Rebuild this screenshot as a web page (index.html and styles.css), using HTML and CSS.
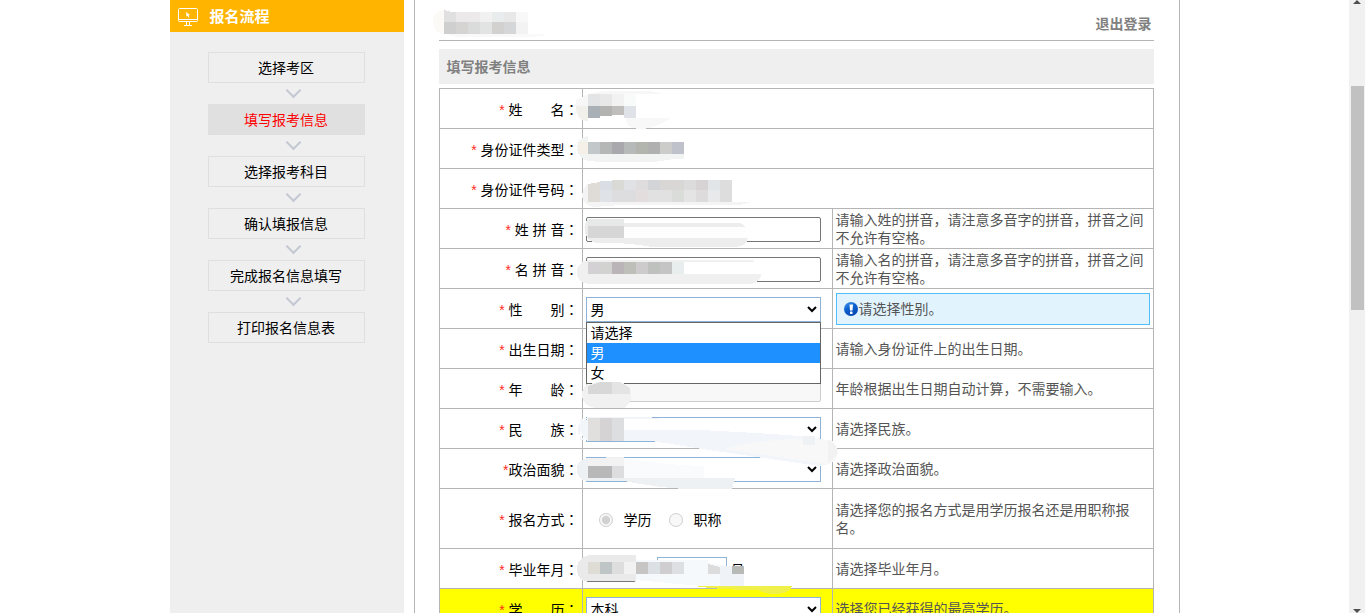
FILE: index.html
```html
<!DOCTYPE html>
<html lang="zh-CN">
<head>
<meta charset="utf-8">
<title>填写报考信息</title>
<link rel="stylesheet" href="styles.css">
</head>
<body>
<div class="window">
  <div class="page">
    <div class="container">
      <aside class="sidebar">
        <h2 class="sidebar-title">
          <svg class="monitor" width="20" height="18" viewBox="0 0 20 18" fill="none" stroke="#fff" aria-hidden="true">
            <rect x="0.5" y="0.5" width="19" height="13" rx="1"/>
            <path d="M1 11.5H19M8.500 14V17M11.500 14V17M6 17.500H14"/>
            <path d="M8 4L12 7L10.500 7.500L11.500 9.500L10.500 9.500L9.500 8L8.500 8.500Z" fill="#fff" stroke="none"/>
          </svg>
          报名流程
        </h2>
        <ol class="steps">
          <li class="step">选择考区</li>
          <li class="step current">填写报考信息</li>
          <li class="step">选择报考科目</li>
          <li class="step">确认填报信息</li>
          <li class="step">完成报名信息填写</li>
          <li class="step">打印报名信息表</li>
        </ol>
      </aside>
      <main class="main">
        <header class="top">
          <a class="logout" href="#">退出登录</a>
        </header>
        <h1 class="section-title">填写报考信息</h1>
        <form>
          <table class="form-table">
            <colgroup><col class="col-label"><col class="col-field"><col class="col-hint"></colgroup>
            <tbody>
              <tr><th><i>*</i> 姓　　名<b>：</b></th><td colspan="2"></td></tr>
              <tr><th><i>*</i> 身份证件类型<b>：</b></th><td colspan="2"></td></tr>
              <tr><th><i>*</i> 身份证件号码<b>：</b></th><td colspan="2"></td></tr>
              <tr><th><label for="xing"><i>*</i> 姓 拼 音<b>：</b></label></th><td class="field"><input class="control text" id="xing" type="text"></td><td class="hint">请输入姓的拼音，请注意多音字的拼音，拼音之间不允许有空格。</td></tr>
              <tr><th><label for="ming"><i>*</i> 名 拼 音<b>：</b></label></th><td class="field"><input class="control text" id="ming" type="text"></td><td class="hint">请输入名的拼音，请注意多音字的拼音，拼音之间不允许有空格。</td></tr>
              <tr><th><label for="sex"><i>*</i> 性　　别<b>：</b></label></th>
                <td class="field"><div class="dropdown">
                  <select class="control select" id="sex"><option>请选择</option><option selected>男</option><option>女</option></select>
                  <ul class="options" role="listbox" aria-label="性别">
                    <li role="option">请选择</li>
                    <li role="option" class="selected" aria-selected="true">男</li>
                    <li role="option">女</li>
                  </ul>
                </div></td>
                <td class="hint"><div class="tip">
                  <svg width="14" height="14" viewBox="0 0 14 14" aria-hidden="true">
                    <defs><linearGradient id="ball" x1="0" y1="0" x2="0.500" y2="1"><stop offset="0" stop-color="#3d9bee"/><stop offset="0.500" stop-color="#0d62cf"/><stop offset="1" stop-color="#0648b4"/></linearGradient></defs>
                    <circle cx="7" cy="7" r="7" fill="url(#ball)"/>
                    <path d="M5.500 2.500H9L8.500 8.500H6Z" fill="#fff"/><rect x="6" y="9.500" width="2.500" height="2.500" rx="0.500" fill="#fff"/>
                  </svg>请选择性别。</div></td></tr>
              <tr><th><label for="birth"><i>*</i> 出生日期<b>：</b></label></th><td class="field"><input class="control text" id="birth" type="text"></td><td class="hint">请输入身份证件上的出生日期。</td></tr>
              <tr><th><label for="age"><i>*</i> 年　　龄<b>：</b></label></th><td class="field"><input class="control text" id="age" type="text" disabled></td><td class="hint">年龄根据出生日期自动计算，不需要输入。</td></tr>
              <tr><th><label for="nation"><i>*</i> 民　　族<b>：</b></label></th><td class="field"><select class="control select" id="nation"><option></option></select></td><td class="hint">请选择民族。</td></tr>
              <tr><th><label for="party"><i>*</i>政治面貌<b>：</b></label></th><td class="field"><select class="control select" id="party"><option></option></select></td><td class="hint">请选择政治面貌。</td></tr>
              <tr class="tall"><th><i>*</i> 报名方式<b>：</b></th>
                <td class="field"><div class="radios">
                  <label><input type="radio" name="way" checked disabled>学历</label>
                  <label><input type="radio" name="way" disabled>职称</label>
                </div></td><td class="hint">请选择您的报名方式是用学历报名还是用职称报名。</td></tr>
              <tr><th><i>*</i> 毕业年月<b>：</b></th>
                <td class="field"><div class="date">
                  <input class="control year" type="text" aria-label="毕业年">
                  <select class="control select month" aria-label="毕业月"><option></option></select>
                  <span>月</span>
                </div></td><td class="hint">请选择毕业年月。</td></tr>
              <tr class="highlight"><th><label for="degree"><i>*</i> 学　　历<b>：</b></label></th><td class="field"><select class="control select" id="degree"><option>本科</option></select></td><td class="hint">选择您已经获得的最高学历。</td></tr>
            </tbody>
          </table>
        </form>
        <svg class="masks" width="766" height="613" viewBox="414 0 766 613" aria-hidden="true" shape-rendering="crispEdges">
          <!-- account -->
          <path d="M444 10C436 10 432 15 433 24C434 31 440 34 444 34Z" fill="#fcfaf7"/>
          <path d="M448 34H546C546 36 536 37 520 37H460Q450 37 448 34" fill="#f9f9f9"/>
          <path d="M444 10L452 12H456V22H444Z" fill="#e0e0e0"/><path d="M456 12h24v10h-24z" fill="#ebe9e9"/><path d="M480 12h12v10h-12z" fill="#f0f1f0"/><path d="M492 12h12v10h-12z" fill="#e9ecec"/><path d="M504 12h12v10h-12z" fill="#e8e8e8"/><path d="M516 12h12v10h-12z" fill="#f8f8f8"/>
          <path d="M444 22h12v12h-12z" fill="#cfcfcf"/><path d="M456 22h12v12h-12z" fill="#d6d4d3"/><path d="M468 22h12v12h-12z" fill="#d9dcda"/><path d="M480 22h12v12h-12z" fill="#e1e4e3"/><path d="M492 22h12v12h-12z" fill="#d3d1d0"/><path d="M504 22h12v12h-12z" fill="#d5d6d8"/><path d="M516 22h12v12h-12z" fill="#f3f3f3"/>
          <!-- name -->
          <path d="M576 100Q590 91 610 91H650L664 94H588V121C579 122 575 116 576 106Z" fill="#f7f7f7"/>
          <path d="M576 106H588V121C580 121 576 114 576 106" fill="#f2f0eb"/>
          <path d="M626 118H671Q655 129 640 129C629 129 625 124 626 118" fill="#f8f8f8"/>
          <path d="M588 94h12v12h-12z" fill="#e3e4e6"/><path d="M600 94h12v12h-12z" fill="#e8e8e9"/><path d="M612 94h12v12h-12z" fill="#f2f2f2"/><path d="M624 94h12v12h-12z" fill="#f9fbfb"/>
          <path d="M588 106h12v12h-12z" fill="#a9b1b6"/><path d="M600 106h12v10h-12z" fill="#b3b4b2"/><path d="M612 106h12v9h-12z" fill="#bfbebc"/><path d="M624 106h12v12h-12z" fill="#dfe3e7"/>
          <!-- document type -->
          <path d="M588 136C580 137 577 142 577 149C578 157 584 161 590 161L600 162H654L674 159H684V154H588Z" fill="#f2f3f3"/>
          <path d="M578 142h10v12h-9z" fill="#f4f0e7"/>
          <path d="M588 142h12v12h-12z" fill="#c2c7ca"/><path d="M600 142h12v12h-12z" fill="#b4b7b5"/><path d="M612 142h12v12h-12z" fill="#a9a9ad"/><path d="M624 142h12v12h-12z" fill="#b6bbba"/><path d="M636 142h12v12h-12z" fill="#b2b5ae"/><path d="M648 142h12v12h-12z" fill="#b0b0b0"/><path d="M660 142h12v12h-12z" fill="#cccdca"/><path d="M672 142h12v12h-12z" fill="#bfc2cb"/>
          <!-- document number -->
          <path d="M588 184C579 190 580 206 594 207L620 205H740L752 202H588Z" fill="#f4f4f4"/>
          <path d="M588 184L600 182V202H588Z" fill="#dfdcd7"/><path d="M600 181h12v9h-12z" fill="#d8dee3"/><path d="M600 190h12v12h-12z" fill="#dfe3e7"/><path d="M612 180h12v10h-12z" fill="#d9dad5"/><path d="M624 180h12v10h-12z" fill="#e0e1e5"/><path d="M636 180h12v10h-12z" fill="#dedcdc"/><path d="M648 180h12v10h-12z" fill="#d3d4d7"/><path d="M660 180h24v10h-24z" fill="#d8d7d5"/><path d="M684 180h12v10h-12z" fill="#dcdcdc"/><path d="M696 180h12v10h-12z" fill="#d7d2d4"/><path d="M708 180h12v10h-12z" fill="#e2e5e7"/><path d="M720 180h12v22h-12z" fill="#dedddd"/>
          <path d="M612 190h24v12h-24z" fill="#dddddf"/><path d="M636 190h12v12h-12z" fill="#e3dedd"/><path d="M648 190h36v12h-36z" fill="#e1e1e2"/><path d="M672 190h12v12h-12z" fill="#dadcda"/><path d="M684 190h12v12h-12z" fill="#e4e4e4"/><path d="M696 190h12v12h-12z" fill="#dddbdc"/><path d="M708 190h12v12h-12z" fill="#e8e9eb"/>
          <!-- surname pinyin -->
          <path d="M588 219H624V223H740Q748 225 746 238H748Q746 246 736 247H652Q630 243 610 243H596C583 241 582 223 588 219" fill="#ededed"/>
          <path d="M624 227h122v11h-122z" fill="#fefefe"/><path d="M588 219h36v7h-36z" fill="#e7e8e8"/><path d="M588 226h36v12h-36z" fill="#d6d6d6"/>
          <!-- given name pinyin -->
          <path d="M588 260H752Q758 262 756 274H761Q760 284 748 284H590C573 284 572 263 588 260" fill="#f0f0f0"/>
          <path d="M672 262h84v12h-84z" fill="#fff"/><path d="M588 262h12v12h-12z" fill="#d3d1d3"/><path d="M600 262h12v12h-12z" fill="#d2d3d0"/><path d="M612 262h12v12h-12z" fill="#bab4b9"/><path d="M624 262h12v12h-12z" fill="#bfbfba"/><path d="M636 262h12v12h-12z" fill="#cecbcc"/><path d="M648 262h24v12h-24z" fill="#bfc1bf"/><path d="M660 262h12v12h-12z" fill="#c4c4c4"/><path d="M672 262h12v12h-12z" fill="#e8eded"/>
          <!-- age -->
          <path d="M590 384C579 386 578 405 594 408H624C636 402 633 385 620 382H596Z" fill="#f1f1f1"/>
          <path d="M588 386L600 382H612V394H588Z" fill="#d8d8d8"/><path d="M612 382h8l10 6v6h-18z" fill="#e4e4e4"/>
          <!-- ethnic group -->
          <path d="M588 417H648L662 419H580V440H588C574 440 575 420 588 417" fill="#f1f4f8"/>
          <path d="M580 420H624V430H700Q760 433 800 436Q836 438 838 450Q837 464 820 466Q790 462 750 456Q700 449 652 441H596C583 443 578 433 580 420" fill="#f2f6fa"/>
          <path d="M724 449Q760 439 803 439L832 440Q840 448 837 457Q833 465 824 464L800 460Z" fill="#f8f8f8"/>
          <path d="M803 436h12v9h-12z" fill="#eff2f4"/><path d="M828 440Q841 447 836 456L828 463Z" fill="#f2f2f2"/>
          <path d="M588 418h12v23h-12z" fill="#e0dfde"/><path d="M600 418h12v23h-12z" fill="#d5d3d4"/><path d="M612 418h12v23h-12z" fill="#dcdee0"/>
          <!-- political status -->
          <path d="M588 458C573 459 573 479 586 481H624Q660 488 686 489H732L735 478H624V457Z" fill="#edf1f4"/>
          <path d="M624 458Q660 465 704 466V478H624Z" fill="#fafbfc"/>
          <path d="M588 458h36v8h-36z" fill="#f2f2f2"/><path d="M588 466h24v12h-24z" fill="#b9b8b9"/><path d="M612 466h12v12h-12z" fill="#dddddf"/>
          <!-- graduation date -->
          <path d="M590 555Q576 558 577 571Q578 581 588 581H636V555Z" fill="#eaeaea"/>
          <path d="M636 560H708V563L727 566V586H700L636 580Z" fill="#f6f9fc"/>
          <path d="M588 562h12v12h-12z" fill="#dfdbd5"/><path d="M600 562h12v12h-12z" fill="#bfc4c7"/><path d="M612 562h12v12h-12z" fill="#dedede"/><path d="M624 562h12v12h-12z" fill="#f2f2f2"/><path d="M636 562h12v12h-12z" fill="#c6c5c4"/><path d="M648 562h12v12h-12z" fill="#dae0e4"/><path d="M660 562h12v12h-12z" fill="#d0cdd0"/><path d="M672 562h12v12h-12z" fill="#dddfe2"/>
          <path d="M708 564L720 567V574H708Z" fill="#dcdcdd"/><path d="M720 566h24v20h-24z" fill="#eff2f6"/><path d="M732 566h12v8h-12z" fill="#b8bab8"/>
          <path d="M694 586H792Q790 593 778 594Q764 594 758 590Q720 590 694 586" fill="#eff04a"/>
        </svg>
      </main>
    </div>
  </div>
  <div class="scrollbar" aria-hidden="true">
    <svg width="8" height="4" viewBox="0 0 8 4"><path d="M4 0L8 4H0Z" fill="#505050"/></svg>
    <div class="thumb"></div>
    <svg width="8" height="4" viewBox="0 0 8 4"><path d="M4 4L8 0H0Z" fill="#505050"/></svg>
  </div>
</div>
</body>
</html>
```
FILE: styles.css
```css
* { box-sizing: border-box; }

body {
  margin: 0;
  background: #fff;
  color: #000;
  font: 14px/18px "Liberation Sans", "Noto Sans CJK SC", sans-serif;
}

.window {
  display: flex;
  height: 100vh;
  overflow: hidden;
}

.page { flex: 1; min-width: 0; overflow: hidden; }

.container {
  display: flex;
  gap: 10px;
  max-width: 1010px;
  min-height: 100%;
  margin: 0 auto;
}

/* Sidebar */
.sidebar {
  flex: 0 0 234px;
  background: #efefef;
}

.sidebar-title {
  display: flex;
  align-items: center;
  gap: 12px;
  height: 32px;
  margin: 0;
  padding: 1px 0 0 8px;
  background: #ffb400;
  color: #fff;
  font-size: 15px;
}

.steps {
  display: grid;
  gap: 21px;
  margin: 0;
  padding: 20px 39px 20px 38px;
  list-style: none;
}

.step {
  position: relative;
  height: 31px;
  border: 1px solid #dfdfdf;
  line-height: 31px;
  text-align: center;
}

.step.current { background: #e0e0e0; color: #f00; }

.step:not(:last-child)::after {
  content: "";
  position: absolute;
  left: 79px;
  top: 32px;
  width: 9px;
  height: 9px;
  border: solid #c3c8d2;
  border-width: 0 2px 2px 0;
  transform: rotate(45deg);
}

/* Main column */
.main {
  position: relative;
  flex: 1;
  min-width: 0;
  padding: 0 25px 0 24px;
  border: solid #b5b5b5;
  border-width: 0 1px;
}

.top {
  display: flex;
  justify-content: flex-end;
  align-items: center;
  height: 41px;
  padding: 8px 2px 0;
  border-bottom: 1px solid #b5b5b5;
}

.logout {
  color: #808080;
  font-weight: bold;
  text-decoration: none;
}

.section-title {
  margin: 8px 0 4px;
  padding: 1px 8px 0;
  background: #efefef;
  color: #808080;
  font-size: 14px;
  line-height: 34px;
}

.form-table {
  width: 100%;
  border-collapse: collapse;
  table-layout: fixed;
}

.col-label { width: 143px; }
.col-field { width: 250px; }

.form-table tr { height: 40px; }
.form-table .tall { height: 60px; }
.form-table .highlight { background: #ff0; }

.form-table th,
.form-table td {
  padding: 0 3px;
  border: 1px solid #b5b5b5;
  font-weight: normal;
  text-align: left;
}

.form-table th { padding-top: 2px; text-align: right; white-space: nowrap; }
.form-table th i { color: #ff2a1a; font-style: normal; }
.form-table .field { padding-top: 2px; }
.form-table .hint { color: #555; }

/* Centred form of the full-width colon */
.form-table th b {
  font-family: "Noto Sans CJK TC", sans-serif;
  font-feature-settings: "locl" 0;
  font-weight: normal;
}

.control {
  display: block;
  width: 235px;
  height: 25px;
  margin: 0;
  background: #fff;
  color: #000;
  font: inherit;
}

.text, .year { padding: 0 3px; border: 1px solid #767676; border-radius: 2px; }
.text:disabled { border-color: #ccc; background: #f8f8f8; }
.select { padding: 0; border: 1px solid #8fb3d6; border-radius: 0; }

.dropdown { position: relative; width: 235px; }

.options {
  position: absolute;
  z-index: 1;
  top: 100%;
  left: 0;
  width: 100%;
  margin: 0;
  padding: 0;
  border: 1px solid #666;
  background: #fff;
  line-height: 20px;
  list-style: none;
}

.options li { padding: 0 4px; }
.options .selected { background: #1e90ff; color: #fff; }

.tip {
  display: flex;
  align-items: center;
  gap: 1px;
  height: 32px;
  padding: 0 7px;
  border: 1px solid #4fbffa;
  background: #e1f4fe;
}

.radios { display: flex; gap: 17px; padding-left: 13px; }
.radios label { display: flex; align-items: center; gap: 11px; }
.radios input { width: 14px; height: 14px; margin: 0; }

.date { display: flex; align-items: center; gap: 4px; }
.date .year { width: 50px; margin-right: 17px; }
.date .month { width: 70px; appearance: none; }

.masks {
  position: absolute;
  z-index: 2;
  top: 0;
  left: -1px;
  pointer-events: none;
}

/* Scrollbar */
.scrollbar {
  display: flex;
  flex: 0 0 16px;
  flex-direction: column;
  align-items: center;
  background: #f1f1f1;
}

.thumb {
  flex: 0 0 224px;
  width: 13px;
  margin: 82px 0 auto;
  background: #c1c1c1;
}
```
